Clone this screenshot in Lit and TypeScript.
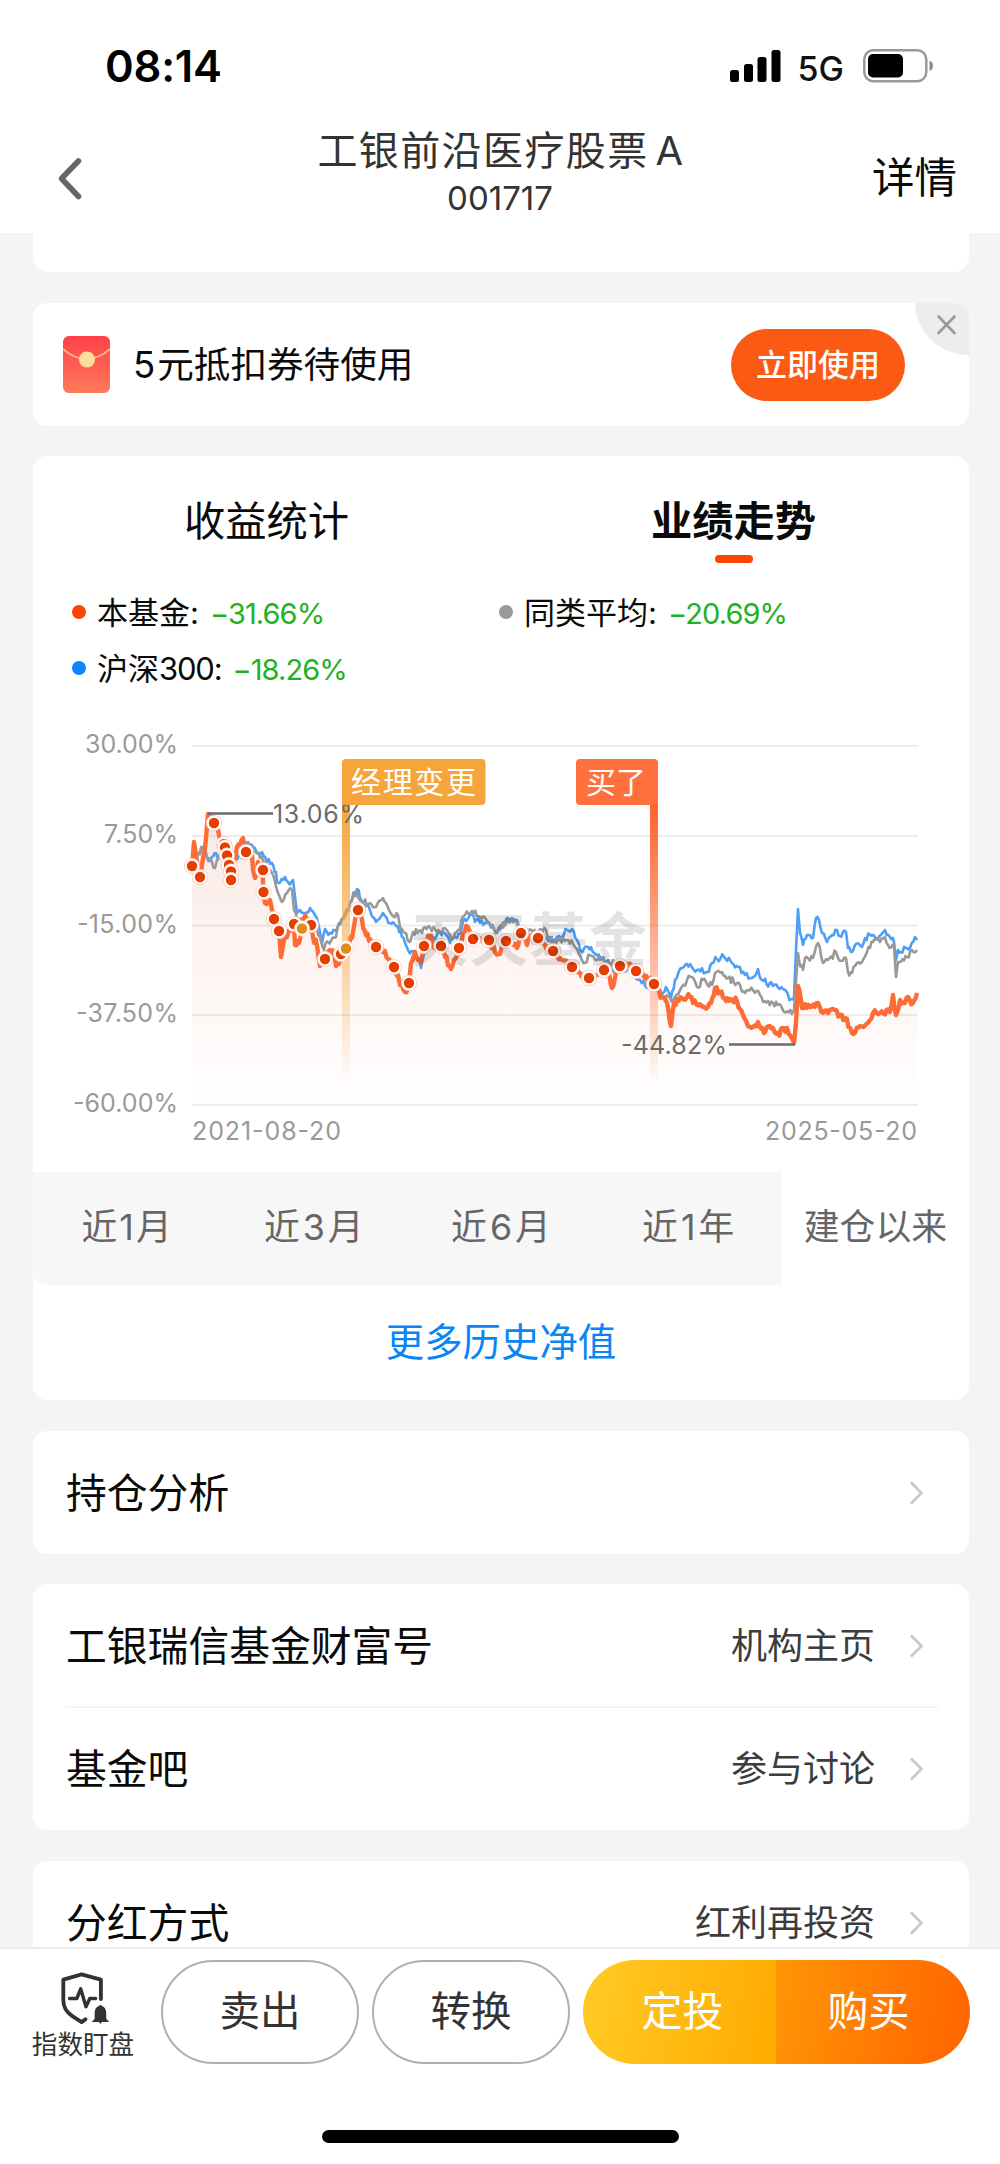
import { LitElement, html, css, svg } from "lit";
import { customElement, property } from "lit/decorators.js";

type Pt = [number, number];

const parse = (s: string): Pt[] =>
  s.trim().split(/\s+/).map((p) => p.split(",").map(Number) as Pt);

const FUND = parse(`192,866 194,842 196,855 198,868 201,872 203,858 205,848 206,838 208,814 210,816 214,823 218,830 221,840 224,845 225,850 227,857 229,866 231,878 233,866 235,858 237,847 240,845 243,838 246,850 249,846 252,855 253,870 255,878 258,862 263,870 263,892 265,903 270,900 272,910 274,919 276,928 279,931 281,957 284,940 287,937 290,930 294,924 295,945 299,943 302,929 304,918 308,920 311,925 313,937 317,945 320,966 325,959 330,950 334,953 336,966 339,964 341,955 346,948 352,938 354,926 358,910 362,920 366,935 372,943 376,947 383,952 390,960 394,967 398,975 400,985 405,992 409,983 411,963 415,952 418,960 421,962 424,946 428,936 431,936 434,948 441,946 445,957 451,969 454,960 459,948 463,933 468,927 473,939 480,938 489,940 495,952 500,954 503,946 506,941 512,943 517,948 521,933 527,945 532,935 538,938 543,943 553,951 562,960 572,967 580,973 589,978 597,975 604,970 608,972 612,988 616,973 620,966 628,965 636,971 645,978 654,984 662,997 667,1003 671,1026 674,1003 682,998 690,997 693,1003 703,1007 711,1003 715,988 720,992 726,1001 737,1001 743,1015 748,1026 753,1027 758,1022 764,1033 767,1027 773,1028 778,1033 787,1028 794,1043 796,1023 798,986 802,1008 810,1007 818,1003 823,1013 833,1009 840,1015 845,1018 852,1033 860,1026 870,1020 873,1013 880,1013 890,1012 893,995 896,1015 900,1000 905,1003 908,997 913,1003 917,993`);

const INDEX = parse(`192,860 198,853 203,847 207,858 210,861 216,853 220,858 233,856 242,858 245,844 248,842 253,847 257,853 262,852 267,862 272,863 276,872 277,882 285,877 288,882 293,880 295,897 297,913 300,910 305,914 310,908 315,915 318,923 322,943 325,929 330,933 337,929 342,920 350,903 357,889 362,902 370,910 376,922 383,913 390,923 398,927 402,937 408,950 415,952 421,968 425,950 430,943 440,932 445,933 450,943 457,938 463,922 470,915 480,923 488,922 497,933 508,918 515,920 520,930 533,937 547,938 553,943 567,930 572,929 577,940 582,952 588,947 600,957 608,960 613,970 630,970 640,980 647,988 653,982 663,993 666,987 671,998 675,980 682,968 690,964 697,970 707,972 712,963 717,959 724,957 732,963 738,967 745,975 752,978 758,969 762,980 773,986 783,989 791,999 794,997 796,950 798,909 800,933 803,945 807,935 813,938 816,918 819,920 822,933 827,942 832,935 837,930 840,936 846,932 848,948 852,952 855,945 862,947 865,938 873,935 878,938 885,930 890,937 894,942 896,960 898,950 907,948 910,948 915,937 917,940`);

const PEERS = parse(`192,862 198,853 203,848 207,858 210,860 215,868 220,855 233,856 245,846 252,847 260,858 267,865 272,873 275,882 278,893 282,902 287,893 292,890 294,910 297,918 305,921 313,923 320,937 324,950 328,942 336,937 340,923 347,912 353,897 357,892 362,902 370,903 376,907 383,898 387,905 392,915 398,915 400,927 405,933 409,942 413,932 422,933 425,927 430,927 437,932 445,928 452,940 458,930 465,915 472,911 480,917 488,922 497,932 508,920 515,920 518,930 533,933 546,930 550,940 560,940 568,940 575,947 582,960 585,963 590,955 600,960 610,963 630,965 640,975 652,977 658,988 665,998 673,1000 675,997 680,990 687,980 692,977 697,987 703,980 712,985 715,973 722,972 728,978 737,983 745,993 753,990 760,995 763,1002 773,1003 782,1008 792,1014 794,1010 798,953 799,960 803,970 805,958 813,958 818,943 823,963 828,960 836,952 838,958 846,958 848,972 852,973 857,963 862,962 867,952 873,942 880,942 885,937 888,945 894,947 896,977 898,962 907,957 912,950 917,950`);

const BUYS = parse(`224,844 225,847.5 227,855.5 229,865 231,871.5 231,880 192,866 200,877 214,823 246,852 263,870 263.5,892 274,919 279,931 294,924 311,925 325,959 341,954 358,910 376,947 394,967 409,983 424,946 441,946 459,948 473,939 489,940 506,941 521,933 538,938 553,951 572,967 589,978 604,970 620,966 636,971 654,984`);
const MANAGER = parse(`302,928.5 346,948.5`);

function daily(points: Pt[], amp: number, seed: number): Pt[] {
  let s = seed;
  const rnd = () => {
    s = (s * 16807) % 2147483647;
    return s / 2147483647 - 0.5;
  };
  const out: Pt[] = [points[0]];
  for (let i = 1; i < points.length; i++) {
    const [x0, y0] = points[i - 1];
    const [x1, y1] = points[i];
    const n = Math.max(1, Math.round((x1 - x0) / 1.6));
    for (let k = 1; k <= n; k++) {
      const t = k / n;
      const j = k === n ? 0 : rnd() * amp * 2;
      out.push([x0 + (x1 - x0) * t, y0 + (y1 - y0) * t + j]);
    }
  }
  return out;
}
const join = (p: Pt[]) => p.map(([x, y]) => `${x.toFixed(1)},${y.toFixed(1)}`).join(" ");

const FUND_LINE = join(daily(FUND, 3.4, 77));
const AREA = `192,1105 ${FUND_LINE} 917,1105`;
const INDEX_LINE = join(daily(INDEX, 3.4, 1234));
const PEERS_LINE = join(daily(PEERS, 3.4, 4321));

const AXIS = [
  { y: 746, label: "30.00%", w: 93 },
  { y: 836, label: "7.50%", w: 74 },
  { y: 925.5, label: "-15.00%", w: 101 },
  { y: 1015, label: "-37.50%", w: 102 },
  { y: 1105, label: "-60.00%", w: 105 },
];

@customElement("trend-chart")
class TrendChart extends LitElement {
  static styles = css`
    :host { display: block; height: 460px; }
    svg { display: block; width: 936px; height: 460px; font-family: Inter, "Noto Sans CJK SC", sans-serif; }
    .axis { fill: #999; font-size: 25px; }
    .peak { fill: #6b6b6b; font-size: 25px; }
    .flag { fill: #fff; font-size: 30px; font-family: "Noto Sans CJK SC", sans-serif; }
    .mark { fill: #000; fill-opacity: 0.11; font-size: 58px; font-weight: 700; font-family: "Noto Sans CJK SC", sans-serif; }
  `;
  render() {
    return html`<svg viewBox="33 705 936 460">
      <defs>
        <linearGradient id="area" gradientUnits="userSpaceOnUse" x1="0" y1="813" x2="0" y2="1105">
          <stop offset="0" stop-color="#f9e8e4" /><stop offset="0.45" stop-color="#fdf4f1" /><stop offset="1" stop-color="#fffefe" />
        </linearGradient>
        <linearGradient id="amber" gradientUnits="userSpaceOnUse" x1="0" y1="805" x2="0" y2="1085">
          <stop offset="0" stop-color="#f5a53b" /><stop offset="1" stop-color="#f5a53b" stop-opacity="0" />
        </linearGradient>
        <linearGradient id="orange" gradientUnits="userSpaceOnUse" x1="0" y1="805" x2="0" y2="1085">
          <stop offset="0" stop-color="#fd6429" /><stop offset="1" stop-color="#fd6429" stop-opacity="0" />
        </linearGradient>
      </defs>
      <polygon points=${AREA} fill="url(#area)" />
      ${AXIS.map((a) => svg`
        <line x1="192" x2="918" y1=${a.y} y2=${a.y} stroke="#000" stroke-opacity="0.07" stroke-width="2" />
        <text class="axis" x=${178 - a.w} y=${a.y + 7} textLength=${a.w}>${a.label}</text>`)}
      <text class="axis" x="192" y="1140" textLength="149">2021-08-20</text>
      <text class="axis" x="765" y="1140" textLength="152">2025-05-20</text>
      <polyline points=${INDEX_LINE} fill="none" stroke="#4f9ef8" stroke-width="2.6" stroke-linejoin="round" />
      <polyline points=${PEERS_LINE} fill="none" stroke="#999" stroke-width="2.6" stroke-linejoin="round" />
      <polyline points=${FUND_LINE} fill="none" stroke="#ff6b35" stroke-width="4.4" stroke-linejoin="round" />
      <path d="M208 813.5h65M729 1044.5h66" stroke="#6b6b6b" stroke-width="2.4" />
      <rect x="342" y="800" width="8" height="300" fill="url(#amber)" />
      <rect x="650" y="800" width="8" height="300" fill="url(#orange)" />
      <text class="peak" x="273" y="823" textLength="91">13.06%</text>
      <text class="peak" x="621" y="1053.5" textLength="106">-44.82%</text>
      ${BUYS.map(([x, y]) => svg`<circle cx=${x} cy=${y} r="7.7" fill="#fff" stroke="#f7c3b3" stroke-width="0.7" /><circle cx=${x} cy=${y} r="5.2" fill="#e63e00" />`)}
      ${MANAGER.map(([x, y]) => svg`<circle cx=${x} cy=${y} r="7.7" fill="#fff" stroke="#f5d8b0" stroke-width="0.7" /><circle cx=${x} cy=${y} r="5.2" fill="#de8c1c" />`)}
      <rect x="342" y="759" width="143.5" height="46" rx="4" fill="#f5a53b" />
      <text class="flag" x="351" y="793" textLength="125">经理变更</text>
      <rect x="576" y="759" width="82" height="46" rx="4" fill="#ff703c" />
      <text class="flag" x="586" y="793" textLength="60">买了</text>
      <text class="mark" x="410" y="961" textLength="237">天天基金</text>
    </svg>`;
  }
}

@customElement("link-row")
class LinkRow extends LitElement {
  @property() label = "";
  @property() value = "";
  static styles = css`
    :host { display: flex; align-items: center; height: 123px; padding: 0 45px 0 33px; }
    .label { flex: 1; font-size: 40.8px; color: #0a0a0a; line-height: 60px; }
    .value { font-size: 36px; color: #3c3c3c; line-height: 54px; margin-right: 34px; }
    svg { display: block; }
  `;
  render() {
    return html`<span class="label">${this.label}</span><span class="value">${this.value}</span>
      <svg width="15" height="26" viewBox="0 0 15 26"><path d="M2 2.5l10.500 10.500L2 23.5" fill="none" stroke="#c8c8c8" stroke-width="2.6" /></svg>`;
  }
}

@customElement("app-root")
class AppRoot extends LitElement {
  static styles = css`
    :host { display: flex; flex-direction: column; width: 1000px; height: 2164px; overflow: hidden; background: #f4f4f4;
      font-family: Inter, "Noto Sans CJK SC", sans-serif; color: #0a0a0a; }
    * { box-sizing: border-box; }
    svg { display: block; }
    .status { flex: none; height: 118px; padding: 14px 67px 0 105px; background: #fff; display: flex; align-items: center; }
    .time { flex: 1; font-size: 43.5px; font-weight: 600; letter-spacing: -0.2px; color: #000; }
    .net { font-size: 34px; font-weight: 500; color: #111; margin: 4px 19px 0 17px; }
    .nav { flex: none; height: 115px; background: #fff; display: grid; grid-template-columns: 200px 1fr 200px; }
    .back { padding: 39px 0 0 56px; }
    .title { text-align: center; color: #333; }
    .name { font-size: 40px; letter-spacing: 1.4px; line-height: 56px; margin: 5px 0 0 2px; }
    .gap { margin-left: 7px; }
    .code { font-size: 33px; line-height: 38px; }
    .detail { font-size: 42.5px; line-height: 60px; padding: 30px 43px 0 0; text-align: right; }
    .body { flex: 1; min-height: 0; overflow: hidden; padding: 0 31px 0 33px; }
    .card { background: #fff; border-radius: 14px; }
    .stub { height: 39px; border-radius: 0 0 16px 16px; margin-bottom: 31px; }
    .coupon { height: 123px; margin-bottom: 30px; padding: 0 64px 0 30px; display: flex; align-items: center; position: relative; overflow: hidden; }
    .coupon-text { flex: 1; margin-left: 23px; font-size: 36.6px; line-height: 54px; }
    .five { margin-right: 2px; }
    .use { width: 174px; height: 72px; border-radius: 36px; background: #fb5a14; color: #fff; font-size: 31px; font-weight: 500; line-height: 71px; text-align: center; }
    .close { position: absolute; top: 0; right: 0; }
    .perf { height: 944px; margin-bottom: 31px; display: flex; flex-direction: column; }
    .tabs { flex: none; height: 119px; display: grid; grid-template-columns: 1fr 1fr; padding: 35px 2px 0 0; font-size: 41.3px; line-height: 60px; text-align: center; }
    .tab { display: flex; flex-direction: column; align-items: center; }
    .on { font-weight: 700; }
    .bar { width: 38px; height: 8px; border-radius: 4px; background: #fd4502; margin-top: 4px; }
    .legend { flex: none; height: 130px; display: grid; grid-template-columns: 427px 1fr; grid-auto-rows: 56px; align-content: start; padding: 9px 0 0 39px; font-size: 31px; }
    .item { display: flex; align-items: center; }
    .txt { position: relative; top: -2px; }
    .dot { width: 14px; height: 14px; border-radius: 50%; margin-right: 11px; }
    .fund { background: #fd4502; }
    .peers { background: #999; }
    .index { background: #0a86ff; }
    .num { letter-spacing: -1.2px; }
    .val { color: #23b123; font-size: 29px; margin-left: 11px; letter-spacing: -0.9px; }
    .ranges { flex: none; height: 113px; margin-top: 7px; display: grid; grid-template-columns: repeat(5, 1fr); font-size: 35.8px; line-height: 111px; text-align: center; color: #666; }
    .range { background: #f7f7f7; }
    .range:first-child { border-radius: 0 0 0 14px; }
    .range:first-child .d { margin: 0 2px; }
    .range.sel { background: #fff; }
    .d { margin: 0 3px; }
    .more { color: #0a86f4; font-size: 38.4px; line-height: 115px; text-align: center; }
    .pos { margin-bottom: 30px; }
    .group { height: 246px; margin-bottom: 31px; }
    .rule { height: 2px; margin: -1px 31px -1px 32px; background: #f4f4f4; }
    .tail { height: 160px; }
    .dock { flex: none; height: 217px; background: #fff; border-top: 2px solid #ededed; display: grid; grid-template-rows: 114px 1fr; justify-items: center; }
    .actions { width: 1000px; display: flex; padding: 11px 30px 0 26px; }
    .watch { width: 114px; display: flex; flex-direction: column; align-items: center; color: #333; font-size: 25.6px; line-height: 36px; padding-top: 12px; white-space: nowrap; }
    .watch svg { margin: 0 0 2px 4px; }
    .pill { width: 198px; height: 104px; border: 2px solid #b0b0b0; border-radius: 52px; margin-left: 13px; font-size: 40.5px; line-height: 99px; text-align: center; color: #333; }
    .pill.first { margin-left: 21px; }
    .buy { flex: 1; margin-left: 13px; height: 104px; border-radius: 52px; overflow: hidden; display: flex; color: #fff; font-size: 41px; line-height: 102px; text-align: center; }
    .plan { width: 193px; padding-left: 6px; background: linear-gradient(100deg, #ffcb25, #ffaa00); }
    .go { flex: 1; padding-right: 9px; background: linear-gradient(100deg, #ff9606, #ff6300); }
    .home { width: 357px; height: 13px; border-radius: 7px; background: #000; margin-top: 67px; }
  `;
  render() {
    return html`
      <header class="status">
        <span class="time">08:14</span>
        <svg width="51" height="32" viewBox="0 0 51 32"><rect x="0" y="20" width="9" height="12" rx="2.5" /><rect x="14" y="14" width="9" height="18" rx="2.5" /><rect x="27.5" y="7" width="9" height="25" rx="2.5" /><rect x="41.5" y="0" width="9" height="32" rx="2.5" /></svg>
        <span class="net">5G</span>
        <svg width="70" height="34" viewBox="0 0 70 34"><rect x="1.3" y="1.3" width="62" height="31" rx="9" fill="none" stroke="#9a9a9a" stroke-width="2.5" /><rect x="5" y="5" width="35" height="23.5" rx="5" /><path d="M66.500 11.500q3.500 1.500 3.500 5.300t-3.500 5.300z" fill="#8c8c8c" /></svg>
      </header>
      <nav class="nav">
        <div class="back"><svg width="28" height="44" viewBox="0 0 28 44"><path d="M22.500 4L5.500 21.500 22.500 39.500" fill="none" stroke="#666" stroke-width="5.6" stroke-linecap="round" stroke-linejoin="round" /></svg></div>
        <div class="title"><div class="name">工银前沿医疗股票<span class="gap">A</span></div><div class="code">001717</div></div>
        <div class="detail">详情</div>
      </nav>
      <main class="body">
        <section class="card stub"></section>
        <section class="card coupon">
          <svg width="47" height="57" viewBox="0 0 47 57"><defs><linearGradient id="env" x1="0" y1="0" x2="0" y2="1"><stop offset="0" stop-color="#ff4048" /><stop offset="1" stop-color="#ff7b5b" /></linearGradient></defs><rect width="47" height="57" rx="6" fill="url(#env)" /><path d="M0 13Q11 23 23.500 23T47 13" fill="none" stroke="#fcb48b" stroke-width="2" /><circle cx="24" cy="23.5" r="8" fill="#fedc9e" /></svg>
          <span class="coupon-text"><span class="five">5</span>元抵扣券待使用</span>
          <span class="use">立即使用</span>
          <svg class="close" width="54" height="52" viewBox="0 0 54 52"><path d="M0 0h54v52C24 52 0 28 0 0z" fill="#ededed" /><path d="M23.500 13.500l16 16.500M39.500 13.500l-16 16.500" stroke="#999" stroke-width="2.6" stroke-linecap="round" /></svg>
        </section>
        <section class="card perf">
          <div class="tabs"><div class="tab">收益统计</div><div class="tab on">业绩走势<i class="bar"></i></div></div>
          <div class="legend">
            <div class="item"><i class="dot fund"></i><span class="txt">本基金:<span class="val">−31.66%</span></span></div>
            <div class="item"><i class="dot peers"></i><span class="txt">同类平均:<span class="val">−20.69%</span></span></div>
            <div class="item"><i class="dot index"></i><span class="txt">沪深<span class="num">300:</span><span class="val">−18.26%</span></span></div>
          </div>
          <trend-chart></trend-chart>
          <div class="ranges">
            <div class="range">近<span class="d">1</span>月</div><div class="range">近<span class="d">3</span>月</div><div class="range">近<span class="d">6</span>月</div><div class="range">近<span class="d">1</span>年</div><div class="range sel">建仓以来</div>
          </div>
          <div class="more">更多历史净值</div>
        </section>
        <section class="card pos"><link-row label="持仓分析"></link-row></section>
        <section class="card group"><link-row label="工银瑞信基金财富号" value="机构主页"></link-row><div class="rule"></div><link-row label="基金吧" value="参与讨论"></link-row></section>
        <section class="card tail"><link-row label="分红方式" value="红利再投资"></link-row></section>
      </main>
      <footer class="dock">
        <div class="actions">
          <div class="watch">
            <svg width="50" height="55" viewBox="0 0 50 55"><g fill="none" stroke="#333" stroke-width="4" stroke-linejoin="round" stroke-linecap="round"><path d="M41.500 28V8L21.500 2.500 2.500 8v21c0 9 4 13 9 16.500L21.500 52l4-3" /><path d="M9 27.500h7.500l4-10 5.500 18.500 4-8.500h6" stroke-width="3.6" /></g><path d="M32 52l3-3.500v-6.500c0-3.500 2-6 4.500-6.800a1.600 1.600 0 0 1 3 0c2.500.8 4.500 3.300 4.500 6.800v6.500l3 3.500h-7.500l-1.500 2-1.500-2z" fill="#333" /></svg>
            指数盯盘
          </div>
          <div class="pill first">卖出</div>
          <div class="pill">转换</div>
          <div class="buy"><span class="plan">定投</span><span class="go">购买</span></div>
        </div>
        <div class="home"></div>
      </footer>`;
  }
}
